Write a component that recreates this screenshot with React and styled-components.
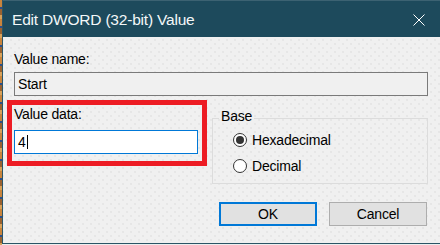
import React from "react"
import styled, { createGlobalStyle } from "styled-components"

const GlobalStyle = createGlobalStyle`
  html, body {
    margin: 0;
    padding: 0;
  }
  body {
    width: 440px;
    height: 245px;
    overflow: hidden;
    font-family: "Liberation Sans", Arial, sans-serif;
  }
  * {
    box-sizing: border-box;
  }
`

const Screen = styled.div`
  display: flex;
  width: 440px;
  height: 245px;
  background: #eeeeee;
`

const Desktop = styled.div`
  width: 2px;
  background: repeating-linear-gradient(
    180deg,
    #c9843c 0 7px,
    #2d4f8a 7px 9px,
    #9a6230 9px 15px,
    #d9a25a 15px 19px
  );
`

const Window = styled.div`
  flex: 1;
  display: flex;
  flex-direction: column;
  height: 244px;
  border-left: 1px solid #2b5566;
  border-bottom: 1px solid #2b5566;
  background-color: #f0f0f0;
  background-image: radial-gradient(circle, #dedede 0.5px, transparent 1px),
    radial-gradient(circle, #dedede 0.5px, transparent 1px);
  background-size: 8px 8px;
  background-position: 0 0, 4px 4px;
`

const TitleBar = styled.div`
  display: flex;
  align-items: center;
  justify-content: space-between;
  height: 37px;
  padding: 2px 15px 0 9px;
  background: #1d4a5c;
  border-top: 1px solid #3c6272;
`

const Title = styled.span`
  font-size: 15.5px;
  letter-spacing: -0.2px;
  color: #f3f7f8;
`

const Body = styled.div`
  display: flex;
  flex-direction: column;
  padding: 15px 12px 0 11px;
  font-size: 14px;
  letter-spacing: -0.2px;
  color: #000;
`

const Label = styled.div`
  line-height: 15px;
  margin-bottom: ${p => p.$gap || 5}px;
`

const Field = styled.div`
  display: flex;
  align-items: center;
  height: 24px;
  width: ${p => (p.$width ? `${p.$width}px` : "auto")};
  padding-left: 3px;
  background: ${p => (p.$focused ? "#fff" : "#f0f0f0")};
  border: 1px solid ${p => (p.$focused ? "#0078d7" : "#7a7a7a")};
`

const Caret = styled.span`
  width: 1px;
  height: 14px;
  margin-left: 1px;
  background: #000;
`

const Row = styled.div`
  display: flex;
  align-items: flex-start;
  margin-top: 4px;
`

const Highlight = styled.div`
  width: 200px;
  height: 66px;
  margin-left: -7px;
  padding: 2px 4px 0 2px;
  border: 5px solid #ed1c24;
`

const GroupBox = styled.fieldset`
  width: 216px;
  height: 75px;
  margin: 9px 0 0 5px;
  padding: 0;
  border: 1px solid #dcdcdc;
`

const Legend = styled.legend`
  margin-left: 6px;
  padding: 0 2px 3px;
  line-height: 15px;
`

const RadioList = styled.div`
  display: flex;
  flex-direction: column;
  gap: 6px;
  padding: 3px 0 0 20px;
`

const RadioRow = styled.label`
  display: flex;
  align-items: center;
  gap: 5px;
  height: 20px;
`

const Circle = styled.span`
  display: flex;
  align-items: center;
  justify-content: center;
  width: 14px;
  height: 14px;
  border-radius: 50%;
  border: 1px solid #333;
  background: #fff;

  &::after {
    content: "";
    width: 8px;
    height: 8px;
    border-radius: 50%;
    background: ${p => (p.$checked ? "#333" : "transparent")};
  }
`

const ButtonRow = styled.div`
  display: flex;
  justify-content: flex-end;
  gap: 12px;
  margin: 18px 1px 0 0;
`

const Button = styled.button`
  width: 98px;
  height: 24px;
  padding: 0;
  font-family: inherit;
  font-size: 14px;
  letter-spacing: -0.2px;
  color: #000;
  background: #e1e1e1;
  border: ${p => (p.$primary ? "2px solid #0078d7" : "1px solid #adadad")};
`

const CloseIcon = () => (
  <svg width="12" height="12" viewBox="0 0 12 12">
    <path d="M0.5 0.5 L11.5 11.5 M11.5 0.5 L0.5 11.5" stroke="#fff" strokeWidth="1" />
  </svg>
)

const Radio = ({ checked, children }) => (
  <RadioRow>
    <Circle $checked={checked} />
    {children}
  </RadioRow>
)

export default function App() {
  return (
    <>
      <GlobalStyle />
      <Screen>
        <Desktop />
        <Window>
          <TitleBar>
            <Title>Edit DWORD (32-bit) Value</Title>
            <CloseIcon />
          </TitleBar>
          <Body>
            <Label>Value name:</Label>
            <Field>Start</Field>
            <Row>
              <Highlight>
                <Label $gap={8}>Value data:</Label>
                <Field $focused $width={184}>
                  4<Caret />
                </Field>
              </Highlight>
              <GroupBox>
                <Legend>Base</Legend>
                <RadioList>
                  <Radio checked>Hexadecimal</Radio>
                  <Radio>Decimal</Radio>
                </RadioList>
              </GroupBox>
            </Row>
            <ButtonRow>
              <Button $primary>OK</Button>
              <Button>Cancel</Button>
            </ButtonRow>
          </Body>
        </Window>
      </Screen>
    </>
  )
}
